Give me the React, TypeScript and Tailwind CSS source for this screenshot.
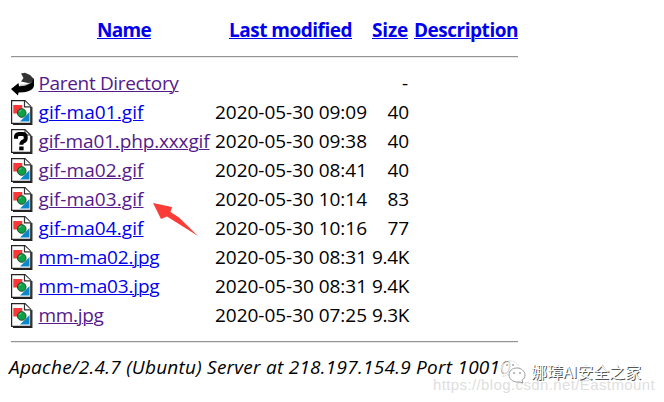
import { useLayoutEffect, useRef } from 'react';

type FitProps = { text: string; width: number; className?: string };

// Sets a line of text to an exact width by spreading the letters evenly.
function Fit({ text, width, className = '' }: FitProps) {
  const ref = useRef<HTMLSpanElement>(null);
  useLayoutEffect(() => {
    const el = ref.current;
    if (!el) return;
    el.style.letterSpacing = '0px';
    const natural = el.getBoundingClientRect().width;
    el.style.letterSpacing = `${(width - natural) / text.length}px`;
  }, [text, width]);
  return (
    <span ref={ref} className={`inline-block whitespace-nowrap ${className}`}>
      {text}
    </span>
  );
}

function BackIcon() {
  return (
    <svg width="24" height="24" viewBox="0 0 24 24">
      <path d="M10 1.500 14 .8 19 3 22.500 6.500 22.500 10.500 17 11 10 9.500 12.500 6z" fill="#333" />
      <path d="M23 6V14c-1 3.500-5 5.800-10.500 6.200L7.500 20.500 7 23.500 0 17l7.500-6 .5 3.200c6 .2 12.500-2 15-8.200z" fill="#000" />
      <path d="M9 13.200c5 .3 9.500-1 12.500-3.700" fill="none" stroke="#777" strokeWidth=".6" />
    </svg>
  );
}

function PageShape() {
  return (
    <>
      <path d="M2 24.300H20.800V7" fill="none" stroke="#222" strokeWidth="1.300" />
      <path d="M.6.600H14L19.800 6.400V23.400H.6z" fill="#fff" stroke="#222" strokeWidth="1.200" />
    </>
  );
}

function ImageIcon() {
  return (
    <svg width="22" height="25" viewBox="0 0 22 25">
      <PageShape />
      <path d="M2.300 5h9v8.500h-9z" fill="#fb3737" />
      <path d="M18.500 12v9.500H9z" fill="#0b87c9" />
      <circle cx="10.700" cy="13" r="4.300" fill="#10a047" stroke="#17502c" strokeWidth="1" />
      <path d="M8.500 12q.3-1.800 2-2" fill="none" stroke="#83d5a1" strokeWidth=".8" />
      <path d="M13.500 1V6.800H19.800" fill="#fff" stroke="#333" strokeWidth="1.200" />
    </svg>
  );
}

function UnknownIcon() {
  return (
    <svg width="22" height="25" viewBox="0 0 22 25">
      <PageShape />
      <path d="M14 1V6H19" fill="none" stroke="#333" strokeWidth="1" />
      <path
        d="M5 9.800V7.500Q5.500 5 8.500 5H11.500Q14.700 5 14.700 8V9.500Q14.700 11.500 12.500 12.300Q10.300 13.200 10.300 15.800"
        fill="none"
        stroke="#000"
        strokeWidth="4"
      />
      <path d="M8.200 17.500h4.400v3.800H8.200z" fill="#000" />
    </svg>
  );
}

const rows = [
  { icon: 'back', name: 'Parent Directory', w: 140, visited: true, date: '', size: '-', sw: 7 },
  { icon: 'image', name: 'gif-ma01.gif', w: 105, visited: false, date: '2020-05-30 09:09', size: '40', sw: 21.500 },
  { icon: 'unknown', name: 'gif-ma01.php.xxxgif', w: 171, visited: true, date: '2020-05-30 09:38', size: '40', sw: 21.500 },
  { icon: 'image', name: 'gif-ma02.gif', w: 105, visited: true, date: '2020-05-30 08:41', size: '40', sw: 21.500 },
  { icon: 'image', name: 'gif-ma03.gif', w: 105, visited: true, date: '2020-05-30 10:14', size: '83', sw: 21.500 },
  { icon: 'image', name: 'gif-ma04.gif', w: 105, visited: false, date: '2020-05-30 10:16', size: '77', sw: 21.500 },
  { icon: 'image', name: 'mm-ma02.jpg', w: 121, visited: false, date: '2020-05-30 08:31', size: '9.4K', sw: 37 },
  { icon: 'image', name: 'mm-ma03.jpg', w: 121, visited: false, date: '2020-05-30 08:31', size: '9.4K', sw: 37 },
  { icon: 'image', name: 'mm.jpg', w: 65, visited: true, date: '2020-05-30 07:25', size: '9.3K', sw: 37 },
];

const link = 'underline decoration-1 underline-offset-1';

export default function App() {
  return (
    <div className="relative h-[402px] w-[664px] overflow-hidden bg-white pl-[11px] pt-4 font-['Open_Sans','Noto_Sans',sans-serif] text-[19px] leading-[29px] text-black">
      <div className="w-[507px]">
        <div className="flex h-10 font-bold text-[#0000ee]">
          <div className="ml-[86px] w-[132px]"><Fit text="Name" width={54} className={link} /></div>
          <div className="w-[143px]"><Fit text="Last modified" width={123} className={link} /></div>
          <div className="w-[42px]"><Fit text="Size" width={36} className={link} /></div>
          <Fit text="Description" width={104} className={link} />
        </div>
        <div className="h-[2px] border-b border-t border-b-[#e8e8e8] border-t-[#949494]" />
        <div className="pt-[11px]">
          {rows.map((r) => (
            <div key={r.name} className="flex h-[29px]">
              <div className="flex w-[27.5px] items-center">
                {r.icon === 'back' ? <BackIcon /> : r.icon === 'image' ? <ImageIcon /> : <UnknownIcon />}
              </div>
              <div className="w-[176.5px]">
                <Fit
                  text={r.name}
                  width={r.w}
                  className={r.visited ? `${link} text-[#551a8b]` : `${link} text-[#0000ee]`}
                />
              </div>
              <div className="w-[152px]">{r.date && <Fit text={r.date} width={152} />}</div>
              <div className="flex w-[42px] justify-end"><Fit text={r.size} width={r.sw} /></div>
            </div>
          ))}
        </div>
        <div className="mt-[11px] h-[2px] border-b border-t border-b-[#e8e8e8] border-t-[#949494]" />
      </div>
      <div className="-ml-[2px] mt-[10px] italic">
        <Fit text="Apache/2.4.7 (Ubuntu) Server at 218.197.154.9 Port 10010" width={502} />
      </div>

      <svg className="absolute left-[153px] top-[202px]" width="46" height="35" viewBox="0 0 46 35">
        <path d="M0 1 19 5 17.500 10 26 15.500 45 34 14 14.500 8 17z" fill="#fb3c37" />
      </svg>

      <div className="absolute left-[433px] top-[375px] font-['Liberation_Sans',Arial,sans-serif] text-[15px] leading-[20px] text-[#dedede]">
        <Fit text="https://blog.csdn.net/Eastmount" width={222} />
      </div>
      <svg className="absolute left-[500px] top-[360px]" width="26" height="24" viewBox="0 0 26 24">
        <path d="M10 1C5 1 1 4 1 8c0 3 1 5 3 6l-1 3 4-2h4c5 0 8-3 8-7s-4-7-9-7z" fill="#fff" fillOpacity=".85" stroke="#ccc" strokeWidth=".7" strokeDasharray="2 1" />
        <path d="M17 8c-5 0-8 3-8 7s4 7 8 7h3l3 1-1-3c2-1 3-3 3-5 0-4-4-7-8-7z" fill="#fff" stroke="#888" strokeWidth=".8" />
        <path d="M6 5h2M12 5h2M13 13h2M19 13h2" stroke="#777" strokeWidth="1" />
      </svg>
      <div className="absolute left-[531px] top-[360px] font-['Noto_Sans_CJK_SC',sans-serif] text-[16px] leading-[22px] text-white [text-shadow:1px_1px_0_#555]">
        <Fit text="娜璋AI安全之家" width={110} />
      </div>
    </div>
  );
}
